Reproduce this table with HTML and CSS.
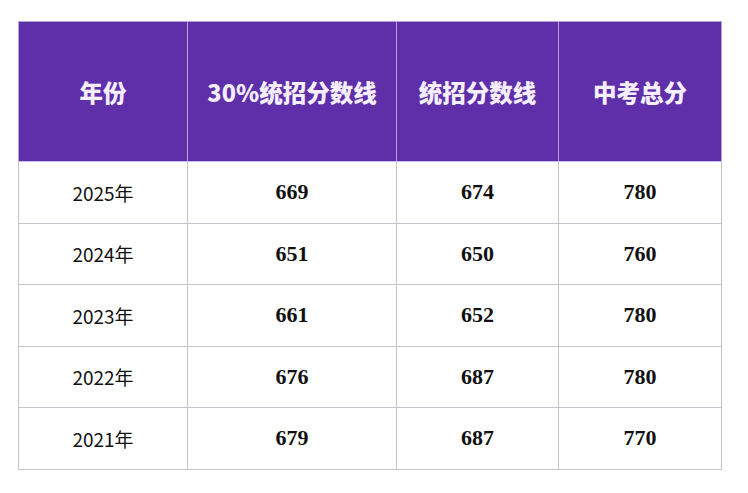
FILE: index.html
```html
<!DOCTYPE html>
<html lang="zh">
<head>
<meta charset="utf-8">
<link rel="stylesheet" href="styles.css">
</head>
<body>
<table class="score-table">
  <colgroup>
    <col class="c1"><col class="c2"><col class="c3"><col class="c4">
  </colgroup>
  <thead>
    <tr>
      <th>年份</th>
      <th>30%统招分数线</th>
      <th>统招分数线</th>
      <th>中考总分</th>
    </tr>
  </thead>
  <tbody>
    <tr><td class="year">2025年</td><td class="num">669</td><td class="num">674</td><td class="num">780</td></tr>
    <tr><td class="year">2024年</td><td class="num">651</td><td class="num">650</td><td class="num">760</td></tr>
    <tr><td class="year">2023年</td><td class="num">661</td><td class="num">652</td><td class="num">780</td></tr>
    <tr><td class="year">2022年</td><td class="num">676</td><td class="num">687</td><td class="num">780</td></tr>
    <tr><td class="year">2021年</td><td class="num">679</td><td class="num">687</td><td class="num">770</td></tr>
  </tbody>
</table>
</body>
</html>
```

FILE: styles.css
```css
html, body {
  margin: 0;
  padding: 0;
  background: #ffffff;
}
body {
  padding: 21px 0 0 18px;
}
.score-table {
  border-collapse: collapse;
  table-layout: fixed;
  width: 703px;
}
.c1 { width: 169px; }
.c2 { width: 209px; }
.c3 { width: 162px; }
.c4 { width: 163px; }
.score-table th {
  height: 139px;
  padding: 0;
  background: #5e2fa9;
  color: #f4eeff;
  font-family: "Noto Sans CJK SC", sans-serif;
  font-weight: 900;
  font-size: 23.5px;
  letter-spacing: 0;
  text-align: center;
  vertical-align: middle;
  border: 1px solid #b3a3d8;
  border-bottom: 1px solid #c9bfe6;
}
.score-table td {
  height: 60.5px;
  padding: 0;
  text-align: center;
  vertical-align: middle;
  border: 1px solid #c3c4cc;
  color: #111111;
}
.score-table td.year {
  font-family: "Noto Sans CJK SC", sans-serif;
  font-size: 19px;
  font-weight: 400;
}
.score-table td.num {
  font-family: "Liberation Serif", "Times New Roman", serif;
  font-size: 22px;
  font-weight: 700;
}
```
